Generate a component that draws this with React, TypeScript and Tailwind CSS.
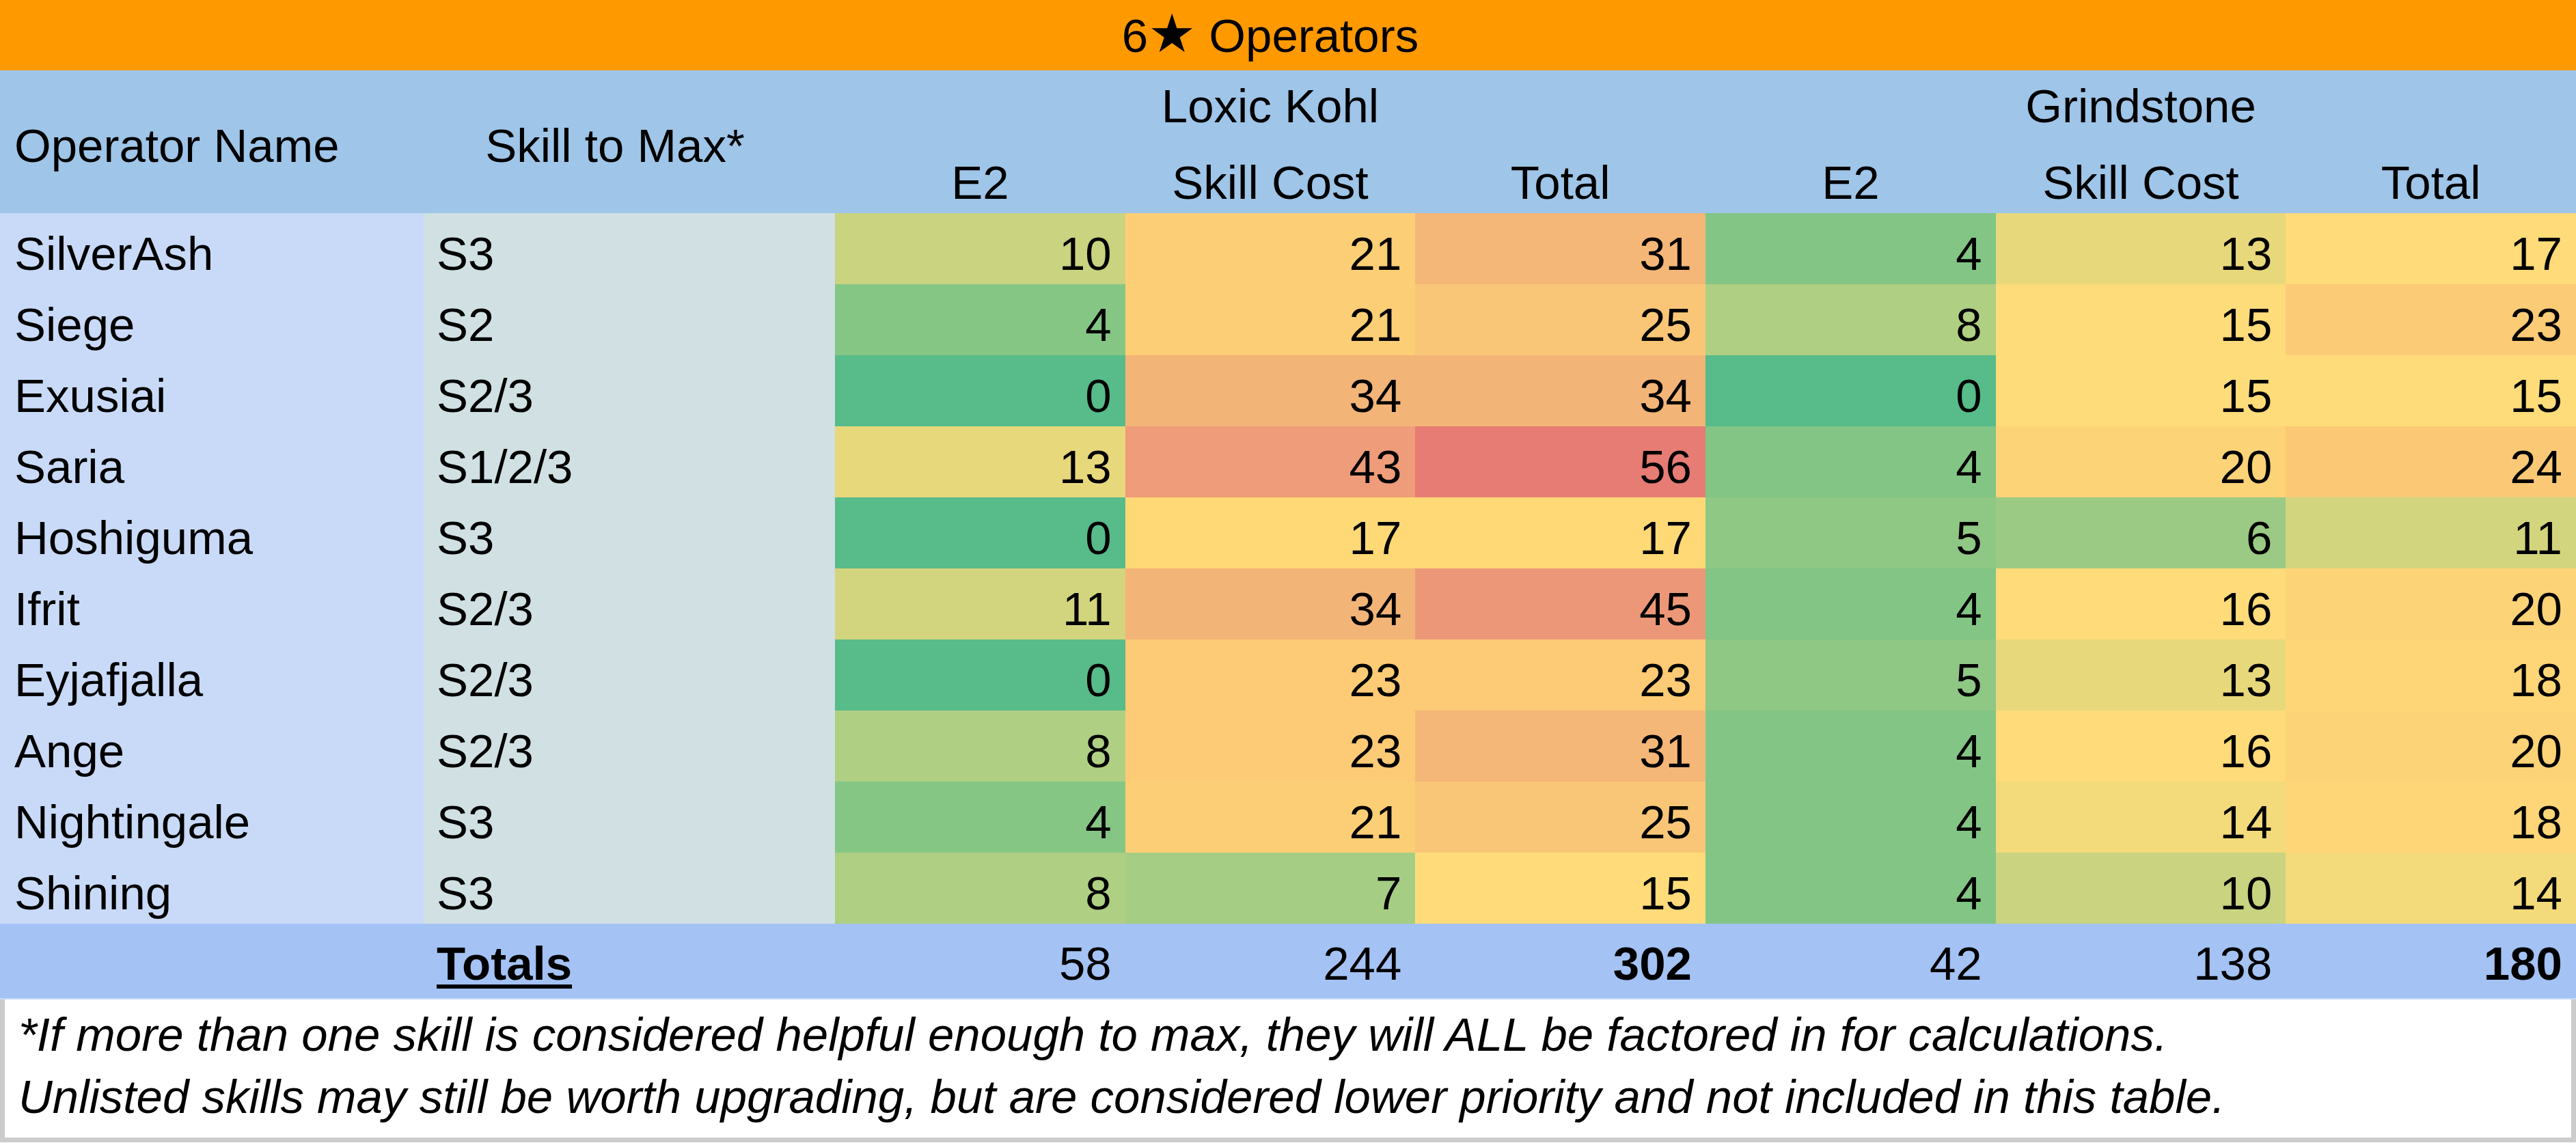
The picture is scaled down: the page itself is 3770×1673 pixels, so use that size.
import React from 'react';

type Cell = [number, string];

type Row = {
  name: string;
  skill: string;
  cells: Cell[];
};

const rows: Row[] = [
  { name: 'SilverAsh', skill: 'S3', cells: [[10, 'bg-[#c9d380]'], [21, 'bg-[#fcce75]'], [31, 'bg-[#f4b778]'], [4, 'bg-[#83c585]'], [13, 'bg-[#e8d87c]'], [17, 'bg-[#ffdb79]']] },
  { name: 'Siege', skill: 'S2', cells: [[4, 'bg-[#85c685]'], [21, 'bg-[#fcce75]'], [25, 'bg-[#f9c677]'], [8, 'bg-[#afcf83]'], [15, 'bg-[#ffdc7a]'], [23, 'bg-[#fccb76]']] },
  { name: 'Exusiai', skill: 'S2/3', cells: [[0, 'bg-[#57bb8a]'], [34, 'bg-[#f3b478]'], [34, 'bg-[#f3b478]'], [0, 'bg-[#57bb8a]'], [15, 'bg-[#ffdc7a]'], [15, 'bg-[#ffdc7a]']] },
  { name: 'Saria', skill: 'S1/2/3', cells: [[13, 'bg-[#e8d87c]'], [43, 'bg-[#ee9c79]'], [56, 'bg-[#e67c73]'], [4, 'bg-[#83c585]'], [20, 'bg-[#fdd377]'], [24, 'bg-[#fbc976]']] },
  { name: 'Hoshiguma', skill: 'S3', cells: [[0, 'bg-[#57bb8a]'], [17, 'bg-[#fed976]'], [17, 'bg-[#fed976]'], [5, 'bg-[#8fc784]'], [6, 'bg-[#9bca84]'], [11, 'bg-[#d3d57e]']] },
  { name: 'Ifrit', skill: 'S2/3', cells: [[11, 'bg-[#d3d57e]'], [34, 'bg-[#f3b478]'], [45, 'bg-[#ec9878]'], [4, 'bg-[#83c585]'], [16, 'bg-[#ffdb7a]'], [20, 'bg-[#fdd377]']] },
  { name: 'Eyjafjalla', skill: 'S2/3', cells: [[0, 'bg-[#57bb8a]'], [23, 'bg-[#fdca76]'], [23, 'bg-[#fdca76]'], [5, 'bg-[#8fc784]'], [13, 'bg-[#e8d87c]'], [18, 'bg-[#fed677]']] },
  { name: 'Ange', skill: 'S2/3', cells: [[8, 'bg-[#afcf83]'], [23, 'bg-[#fdca76]'], [31, 'bg-[#f4b778]'], [4, 'bg-[#83c585]'], [16, 'bg-[#ffdb7a]'], [20, 'bg-[#fdd377]']] },
  { name: 'Nightingale', skill: 'S3', cells: [[4, 'bg-[#85c685]'], [21, 'bg-[#fcce75]'], [25, 'bg-[#f9c677]'], [4, 'bg-[#83c585]'], [14, 'bg-[#f3da7b]'], [18, 'bg-[#fed677]']] },
  { name: 'Shining', skill: 'S3', cells: [[8, 'bg-[#afcf83]'], [7, 'bg-[#a6cd84]'], [15, 'bg-[#ffdb7a]'], [4, 'bg-[#83c585]'], [10, 'bg-[#c9d380]'], [14, 'bg-[#f3da7b]']] },
];

const totals = [
  { value: 58, bold: false },
  { value: 244, bold: false },
  { value: 302, bold: true },
  { value: 42, bold: false },
  { value: 138, bold: false },
  { value: 180, bold: true },
];

const GRID = 'grid grid-cols-[620px_602px_repeat(6,1fr)]';

const MaterialGroup = ({ title }: { title: string }) => (
  <div className="flex-1 flex flex-col">
    <div className="h-[105px] flex items-end justify-center pb-[18px]">{title}</div>
    <div className="h-[104px] grid grid-cols-3">
      {['E2', 'Skill Cost', 'Total'].map((label) => (
        <div key={label} className="flex items-end justify-center pb-[10px]">
          {label}
        </div>
      ))}
    </div>
  </div>
);

export default function App() {
  return (
    <div className="w-[3770px] bg-white text-black text-[69px] leading-none [font-family:'Liberation_Sans','DejaVu_Sans',Arial,sans-serif]">
      {/* Title bar */}
      <div className="h-[103px] bg-[#ff9900] flex items-end justify-center pr-[52px] pb-[16px]">
        <span>
          6<span className="text-[78px] leading-[0px]">★</span> Operators
        </span>
      </div>

      {/* Header */}
      <div className="h-[209px] bg-[#9fc5e8] flex">
        <div className="w-[620px] flex items-end pl-[21px] pb-[64px]">Operator Name</div>
        <div className="w-[602px] flex items-end justify-center pr-[42px] pb-[64px]">Skill to Max*</div>
        <MaterialGroup title="Loxic Kohl" />
        <MaterialGroup title="Grindstone" />
      </div>

      {/* Rows */}
      {rows.map((row) => (
        <div key={row.name} className={`${GRID} h-[104px]`}>
          <div className="bg-[#c9daf8] flex items-end pl-[21px] pb-[10px]">{row.name}</div>
          <div className="bg-[#d0e0e3] flex items-end pl-[19px] pb-[10px]">{row.skill}</div>
          {row.cells.map(([value, bg], i) => (
            <div key={i} className={`${bg} flex items-end justify-end pr-[20px] pb-[10px]`}>
              {value}
            </div>
          ))}
        </div>
      ))}

      {/* Totals */}
      <div className={`${GRID} h-[111px] bg-[#a4c2f4] border-b-2 border-[#c9daf8]`}>
        <div />
        <div className="flex items-end pl-[19px] pb-[16px]">
          <span className="font-bold underline decoration-[6px] underline-offset-[7px]">Totals</span>
        </div>
        {totals.map((t, i) => (
          <div key={i} className={`flex items-end justify-end pr-[20px] pb-[16px] ${t.bold ? 'font-bold' : ''}`}>
            {t.value}
          </div>
        ))}
      </div>

      {/* Footnote */}
      <div className="h-[209px] border-[7px] border-t-0 border-[#cccccc] bg-white pl-[20px] pt-[6px] italic leading-[91px]">
        <p>*If more than one skill is considered helpful enough to max, they will ALL be factored in for calculations.</p>
        <p>Unlisted skills may still be worth upgrading, but are considered lower priority and not included in this table.</p>
      </div>
    </div>
  );
}
